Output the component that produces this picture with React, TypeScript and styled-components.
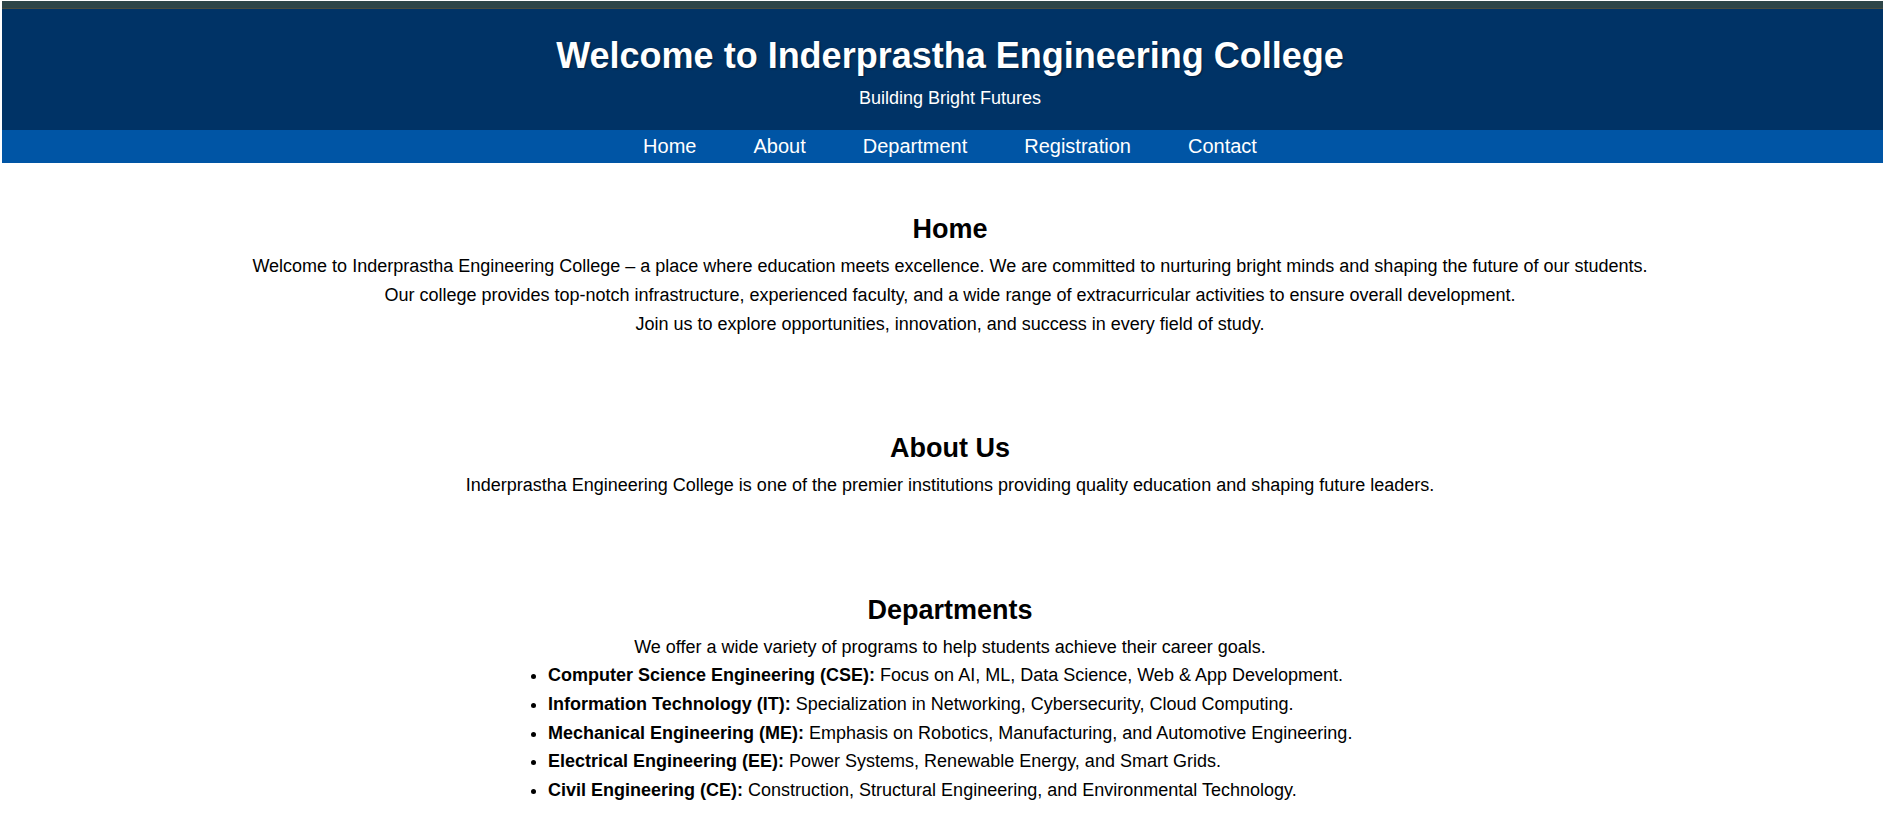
import React from "react";
import styled, { createGlobalStyle } from "styled-components";

const GlobalStyle = createGlobalStyle`
  html, body {
    margin: 0;
    padding: 0;
    background: #ffffff;
  }
  body {
    font-family: "Liberation Sans", Arial, sans-serif;
    color: #000000;
  }
  * { box-sizing: border-box; }
`;

const Page = styled.div`
  padding: 1px 2px 0;
  min-height: 833px;
`;

const TopStrip = styled.div`
  height: 8px;
  background: #2e4548;
  border-bottom: 1px solid #4b4c40;
`;

const Header = styled.header`
  background: #003366;
  color: #ffffff;
  text-align: center;
  padding: 26px 0 21px 15px;
`;

const Title = styled.h1`
  margin: 0;
  font-size: 36px;
  line-height: 41px;
  font-weight: 700;
  text-shadow: 1px 1px 2px rgba(0, 0, 0, 0.4);
`;

const Tagline = styled.p`
  margin: 12px 0 0;
  font-size: 18px;
  line-height: 21px;
`;

const Nav = styled.nav`
  background: #0055a5;
  height: 33px;
  padding-left: 15px;
  display: flex;
  justify-content: center;
  align-items: center;
  gap: 57px;
`;

const NavLink = styled.a`
  color: #ffffff;
  text-decoration: none;
  font-size: 20px;
  line-height: 33px;
`;

const Main = styled.main`
  display: flex;
  flex-direction: column;
  gap: 95px;
  padding: 51px 0 40px 15px;
  text-align: center;
`;

const Section = styled.section`
  display: flex;
  flex-direction: column;
`;

const Heading = styled.h2`
  margin: 0 0 8px;
  font-size: 27px;
  line-height: 30px;
  font-weight: 700;
`;

const Text = styled.p`
  margin: 0;
  font-size: 18px;
  line-height: 28.8px;
`;

const List = styled.ul`
  width: 892px;
  margin: -1px auto 0;
  padding: 0 0 0 44px;
  text-align: left;
`;

const Item = styled.li`
  font-size: 18px;
  line-height: 28.8px;
`;

const navItems = ["Home", "About", "Department", "Registration", "Contact"];

const departments: [string, string][] = [
  ["Computer Science Engineering (CSE):", "Focus on AI, ML, Data Science, Web & App Development."],
  ["Information Technology (IT):", "Specialization in Networking, Cybersecurity, Cloud Computing."],
  ["Mechanical Engineering (ME):", "Emphasis on Robotics, Manufacturing, and Automotive Engineering."],
  ["Electrical Engineering (EE):", "Power Systems, Renewable Energy, and Smart Grids."],
  ["Civil Engineering (CE):", "Construction, Structural Engineering, and Environmental Technology."],
];

export default function App() {
  return (
    <>
      <GlobalStyle />
      <Page>
        <TopStrip />
        <Header>
          <Title>Welcome to Inderprastha Engineering College</Title>
          <Tagline>Building Bright Futures</Tagline>
        </Header>
        <Nav>
          {navItems.map((n) => (
            <NavLink key={n} href="#">
              {n}
            </NavLink>
          ))}
        </Nav>
        <Main>
          <Section>
            <Heading>Home</Heading>
            <Text>
              Welcome to Inderprastha Engineering College – a place where education meets excellence. We are committed to nurturing bright minds and shaping the future of our students.
            </Text>
            <Text>
              Our college provides top-notch infrastructure, experienced faculty, and a wide range of extracurricular activities to ensure overall development.
            </Text>
            <Text>Join us to explore opportunities, innovation, and success in every field of study.</Text>
          </Section>
          <Section>
            <Heading>About Us</Heading>
            <Text>
              Inderprastha Engineering College is one of the premier institutions providing quality education and shaping future leaders.
            </Text>
          </Section>
          <Section>
            <Heading>Departments</Heading>
            <Text>We offer a wide variety of programs to help students achieve their career goals.</Text>
            <List>
              {departments.map(([name, desc]) => (
                <Item key={name}>
                  <strong>{name}</strong> {desc}
                </Item>
              ))}
            </List>
          </Section>
        </Main>
      </Page>
    </>
  );
}
